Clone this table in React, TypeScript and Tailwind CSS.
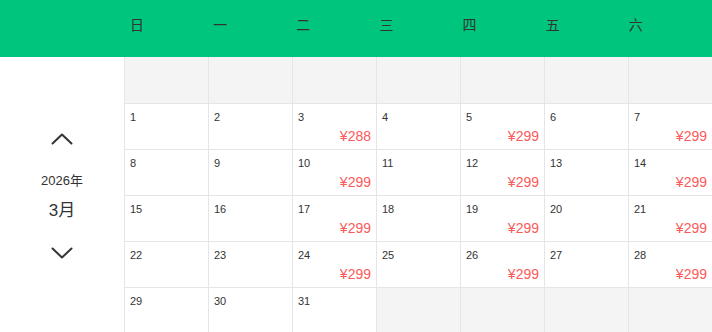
import React from "react";

const FONT = '"Liberation Sans", "Noto Sans CJK SC", Arial, sans-serif';

type Cell = { day?: number; price?: number; empty?: boolean };

function buildCells(): Cell[][] {
  const rows: Cell[][] = [];
  rows.push(Array.from({ length: 7 }, () => ({ empty: true })));
  let day = 1;
  for (let r = 0; r < 5; r++) {
    const row: Cell[] = [];
    for (let c = 0; c < 7; c++) {
      if (day <= 31) {
        let price: number | undefined;
        if (c === 2 || c === 4 || c === 6) price = day === 3 ? 288 : 299;
        if (day > 28) price = undefined;
        row.push({ day, price });
        day++;
      } else {
        row.push({ empty: true });
      }
    }
    rows.push(row);
  }
  return rows;
}

const Chevron = ({ down }: { down?: boolean }) => (
  <svg width="22" height="12" viewBox="0 0 22 12" fill="none">
    <polyline
      points={down ? "1.5,1.5 11,10.5 20.5,1.5" : "1.5,10.5 11,1.5 20.5,10.5"}
      stroke="#333"
      strokeWidth="2"
      strokeLinecap="round"
      strokeLinejoin="round"
    />
  </svg>
);

export default function App() {
  const rows = buildCells();
  const weekdays = ["日", "一", "二", "三", "四", "五", "六"];
  return (
    <div className="w-[712px] h-[332px] overflow-hidden bg-white text-[#333]" style={{ fontFamily: FONT }}>
      <div className="h-[57px] bg-[#00c67d] flex pl-[130px] pb-[8px] items-center">
        {weekdays.map((w) => (
          <div key={w} className="flex-1 text-[14px] leading-[20px] text-[#333]">
            {w}
          </div>
        ))}
      </div>
      <div className="flex">
        <div className="w-[124px] shrink-0 flex flex-col items-center">
          <div className="mt-[76px]">
            <Chevron />
          </div>
          <div className="mt-[27px] text-[13px] leading-[18px]">2026年</div>
          <div className="mt-[9px] text-[17px] leading-[24px]">3月</div>
          <div className="mt-[24px]">
            <Chevron down />
          </div>
        </div>
        <div className="grid grid-cols-[repeat(7,84px)]">
          {rows.map((row, ri) =>
            row.map((cell, ci) => (
              <div
                key={`${ri}-${ci}`}
                className={`border-l border-b border-[#e5e5e5] ${ri === 0 ? "h-[47px]" : "h-[46px]"} ${
                  cell.empty ? "bg-[#f4f4f4]" : "bg-white"
                } pl-[5px] pr-[5px] pt-[5px]`}
              >
                {cell.day !== undefined && (
                  <>
                    <div className="text-[11px] leading-[16px] text-[#333]">{cell.day}</div>
                    {cell.price !== undefined && (
                      <div className="mt-[1px] text-right text-[14px] leading-[20px] text-[#fa5a5a]">¥{cell.price}</div>
                    )}
                  </>
                )}
              </div>
            ))
          )}
        </div>
      </div>
    </div>
  );
}
